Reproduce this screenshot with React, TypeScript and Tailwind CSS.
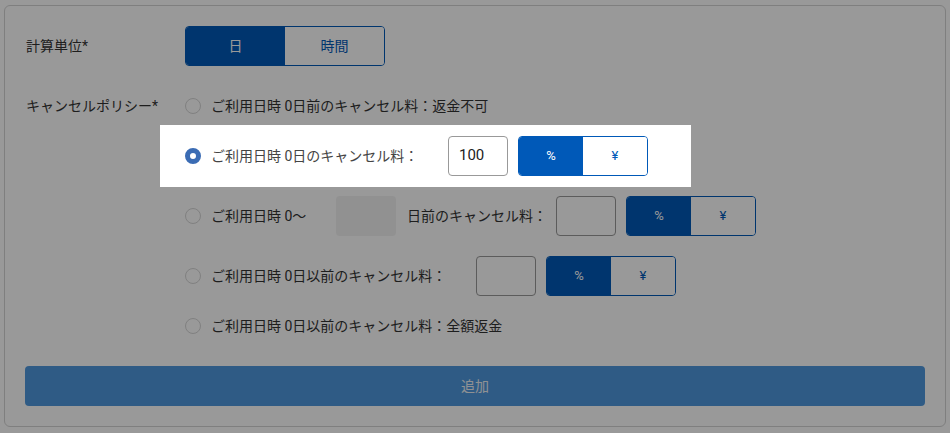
import { ReactNode } from "react";

const font = { fontFamily: "Roboto, 'Noto Sans CJK JP', sans-serif" };

function Radio({ checked }: { checked?: boolean }) {
  return checked ? (
    <span className="block h-4 w-4 shrink-0 rounded-full border-[5px] border-[#3b6cb4] bg-white" />
  ) : (
    <span className="block h-4 w-4 shrink-0 rounded-full border border-[#d6d6d6] bg-white" />
  );
}

function UnitToggle({ small }: { small?: boolean }) {
  return (
    <div className="flex h-10 w-[130px] shrink-0 overflow-hidden rounded border border-[#0059b8]">
      <button type="button" className={`flex-1 bg-[#0059b8] text-white ${small ? "text-[13px]" : "text-sm"}`}>
        %
      </button>
      <button type="button" className={`flex-1 bg-white text-[#0059b8] ${small ? "text-[13px]" : "text-sm"}`}>
        ¥
      </button>
    </div>
  );
}

function NumInput({ value, disabled }: { value?: string; disabled?: boolean }) {
  return disabled ? (
    <div className="h-10 w-[60px] shrink-0 rounded bg-[#f2f2f2]" />
  ) : (
    <div className="flex h-10 w-[60px] shrink-0 items-center rounded border border-[#999] bg-white px-[10px] text-[15px] text-[#222]">
      {value}
    </div>
  );
}

function Row({ checked, children }: { checked?: boolean; children: ReactNode }) {
  return (
    <div className="flex items-center gap-[10px] whitespace-nowrap text-sm text-[#333]">
      <Radio checked={checked} />
      {children}
    </div>
  );
}

export default function App() {
  return (
    <div className="min-h-[433px] bg-white px-[4px] pt-[5px]" style={font}>
      <div className="w-[942px] rounded-md border border-[#d4d4d4] bg-white p-5">
        <div className="flex items-center">
          <div className="w-[160px] pl-px text-sm text-[#333]">計算単位*</div>
          <div className="flex h-10 w-[200px] overflow-hidden rounded border border-[#0059b8] text-sm">
            <button type="button" className="flex-1 bg-[#0059b8] text-white">日</button>
            <button type="button" className="flex-1 bg-white text-[#0059b8]">時間</button>
          </div>
        </div>

        <div className="mt-[30px] flex">
          <div className="h-5 w-[160px] pl-px text-sm leading-5 text-[#333]">キャンセルポリシー*</div>
          <div className="flex flex-col gap-5">
            <div className="h-5">
              <Row>
                <span>ご利用日時 0日前のキャンセル料：返金不可</span>
              </Row>
            </div>

            <div className="relative h-10 self-start">
              <div className="absolute top-[-11px] bottom-[-11px] left-[-25px] right-[-43px] bg-white shadow-[0_0_0_9999px_rgba(0,0,0,0.4)]" />
              <div className="relative">
                <Row checked>
                  <span className="w-[227px] shrink-0 text-[#444]">ご利用日時 0日のキャンセル料：</span>
                  <NumInput value="100" />
                  <UnitToggle small />
                </Row>
              </div>
            </div>

            <Row>
              <span className="w-[115px] shrink-0">ご利用日時 0〜</span>
              <NumInput disabled />
              <span className="ml-px w-[139px] shrink-0">日前のキャンセル料：</span>
              <NumInput />
              <UnitToggle small />
            </Row>

            <Row>
              <span className="w-[255px] shrink-0">ご利用日時 0日以前のキャンセル料：</span>
              <NumInput />
              <UnitToggle small />
            </Row>

            <div className="h-5">
              <Row>
                <span>ご利用日時 0日以前のキャンセル料：全額返金</span>
              </Row>
            </div>
          </div>
        </div>

        <button
          type="button"
          className="mt-[30px] h-10 w-full rounded bg-[#4f98de] text-sm text-[#eef2f6]"
        >
          追加
        </button>
      </div>
    </div>
  );
}
